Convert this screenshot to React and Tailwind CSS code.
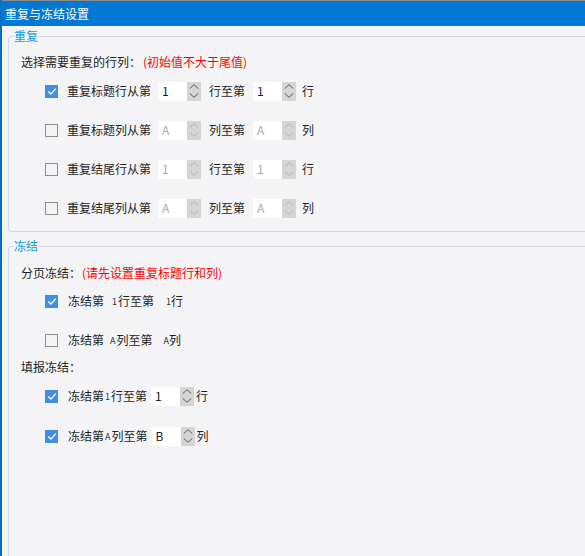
const Check = ({ checked }) =>
  checked ? (
    <span className="flex h-[13px] w-[13px] shrink-0 items-center justify-center bg-[#3f90e4]">
      <svg width="10" height="9" viewBox="0 0 10 9">
        <path d="M1.3 4.6 L3.9 7.1 L8.8 1.6" stroke="#fff" strokeWidth="1.4" fill="none" />
      </svg>
    </span>
  ) : (
    <span className="h-[13px] w-[13px] shrink-0 border border-[#8e8e8e]" />
  );

const Spin = ({ disabled }) => {
  const c = disabled ? "#b4b4b4" : "#5a5a5a";
  return (
    <span className="flex h-[19px] w-[14px] flex-col items-center justify-center gap-[4px] bg-[#d5d5d5]">
      <svg width="10" height="5" viewBox="0 0 10 5">
        <path d="M0.7 4.6 L5 0.7 L9.3 4.6" stroke={c} strokeWidth="1" fill="none" />
      </svg>
      <svg width="10" height="5" viewBox="0 0 10 5">
        <path d="M0.7 0.4 L5 4.3 L9.3 0.4" stroke={c} strokeWidth="1" fill="none" />
      </svg>
    </span>
  );
};

const NumBox = ({ value, disabled, color = "text-[#1b1b1b]" }) => (
  <span className="flex items-center">
    <span
      className={
        "flex h-[19px] w-[29px] items-center bg-white pl-[4px] text-[12px] " +
        (disabled ? "text-[#a9a9a9]" : color)
      }
    >
      {value}
    </span>
    <Spin disabled={disabled} />
  </span>
);

const RepeatRow = ({ checked, label, mid, end, v1, v2, color }) => (
  <div className="flex h-[20px] items-center pl-[24px]">
    <Check checked={checked} />
    <span className="ml-[9px] w-[84px]">{label}</span>
    <span className="ml-[7px]">
      <NumBox value={v1} disabled={!checked} color={color} />
    </span>
    <span className="ml-[8px] w-[36px]">{mid}</span>
    <span className="ml-[8px]">
      <NumBox value={v2} disabled={!checked} color={color} />
    </span>
    <span className="ml-[6px]">{end}</span>
  </div>
);

const Tiny = ({ children, className = "" }) => (
  <span className={"text-[9px] leading-none text-[#333] " + className}>{children}</span>
);

export default function App() {
  return (
    <div className="h-[556px] w-[585px] overflow-hidden border-l-2 border-[#0a6fc4] bg-[#f4f4f6] font-['Noto_Sans_CJK_SC','Liberation_Sans',sans-serif] text-[12px] leading-[16px] text-[#1e1e1e]">
      <div className="h-px bg-[#8a8a8a]" />
      <div className="flex h-[25px] items-center bg-[#0078d4] pl-[3px] text-white">重复与冻结设置</div>

      <fieldset className="ml-[6px] mt-[2px] rounded-l-[4px] border border-r-0 border-[#d9d9db] pb-[13px]">
        <legend className="ml-[5px] text-[#139ade]">重复</legend>
        <div className="pl-[12px]">
          <div className="mt-[8px] flex h-[20px] items-center">
            <span>选择需要重复的行列：</span>
            <span className="ml-[2px] text-[#ff0000]">(初始值不大于尾值)</span>
          </div>
          <div className="mt-[9px] flex flex-col gap-[19px]">
            <RepeatRow checked label="重复标题行从第" mid="行至第" end="行" v1="1" v2="1" color="text-[#1a1466]" />
            <RepeatRow label="重复标题列从第" mid="列至第" end="列" v1="A" v2="A" />
            <RepeatRow label="重复结尾行从第" mid="行至第" end="行" v1="1" v2="1" />
            <RepeatRow label="重复结尾列从第" mid="列至第" end="列" v1="A" v2="A" />
          </div>
        </div>
      </fieldset>

      <fieldset className="ml-[6px] mt-[6px] h-[400px] rounded-l-[4px] border border-r-0 border-[#d9d9db]">
        <legend className="ml-[5px] text-[#139ade]">冻结</legend>
        <div className="pl-[12px]">
          <div className="mt-[9px] flex h-[20px] items-center">
            <span>分页冻结：</span>
            <span className="ml-[1px] text-[#ff0000]">(请先设置重复标题行和列)</span>
          </div>

          <div className="mt-[8px] flex h-[20px] items-center pl-[24px]">
            <Check checked />
            <span className="ml-[10px]">冻结第</span>
            <Tiny className="ml-[8px]">1</Tiny>
            <span className="ml-[1px]">行至第</span>
            <Tiny className="ml-[12px]">1</Tiny>
            <span>行</span>
          </div>

          <div className="mt-[19px] flex h-[20px] items-center pl-[24px]">
            <Check />
            <span className="ml-[10px]">冻结第</span>
            <Tiny className="ml-[6px]">A</Tiny>
            <span className="ml-[1px]">列至第</span>
            <Tiny className="ml-[11px]">A</Tiny>
            <span>列</span>
          </div>

          <div className="mt-[7px] flex h-[20px] items-center">
            <span>填报冻结：</span>
          </div>

          <div className="mt-[9px] flex h-[20px] items-center pl-[24px]">
            <Check checked />
            <span className="ml-[10px]">冻结第</span>
            <Tiny className="ml-[1px]">1</Tiny>
            <span className="ml-[1px]">行至第</span>
            <span className="ml-[4px]">
              <NumBox value="1" />
            </span>
            <span className="ml-[2px]">行</span>
          </div>

          <div className="mt-[20px] flex h-[20px] items-center pl-[24px]">
            <Check checked />
            <span className="ml-[10px]">冻结第</span>
            <Tiny className="ml-[1px]">A</Tiny>
            <span className="ml-[1px]">列至第</span>
            <span className="ml-[4px]">
              <NumBox value="B" />
            </span>
            <span className="ml-[2px]">列</span>
          </div>
        </div>
      </fieldset>
    </div>
  );
}
